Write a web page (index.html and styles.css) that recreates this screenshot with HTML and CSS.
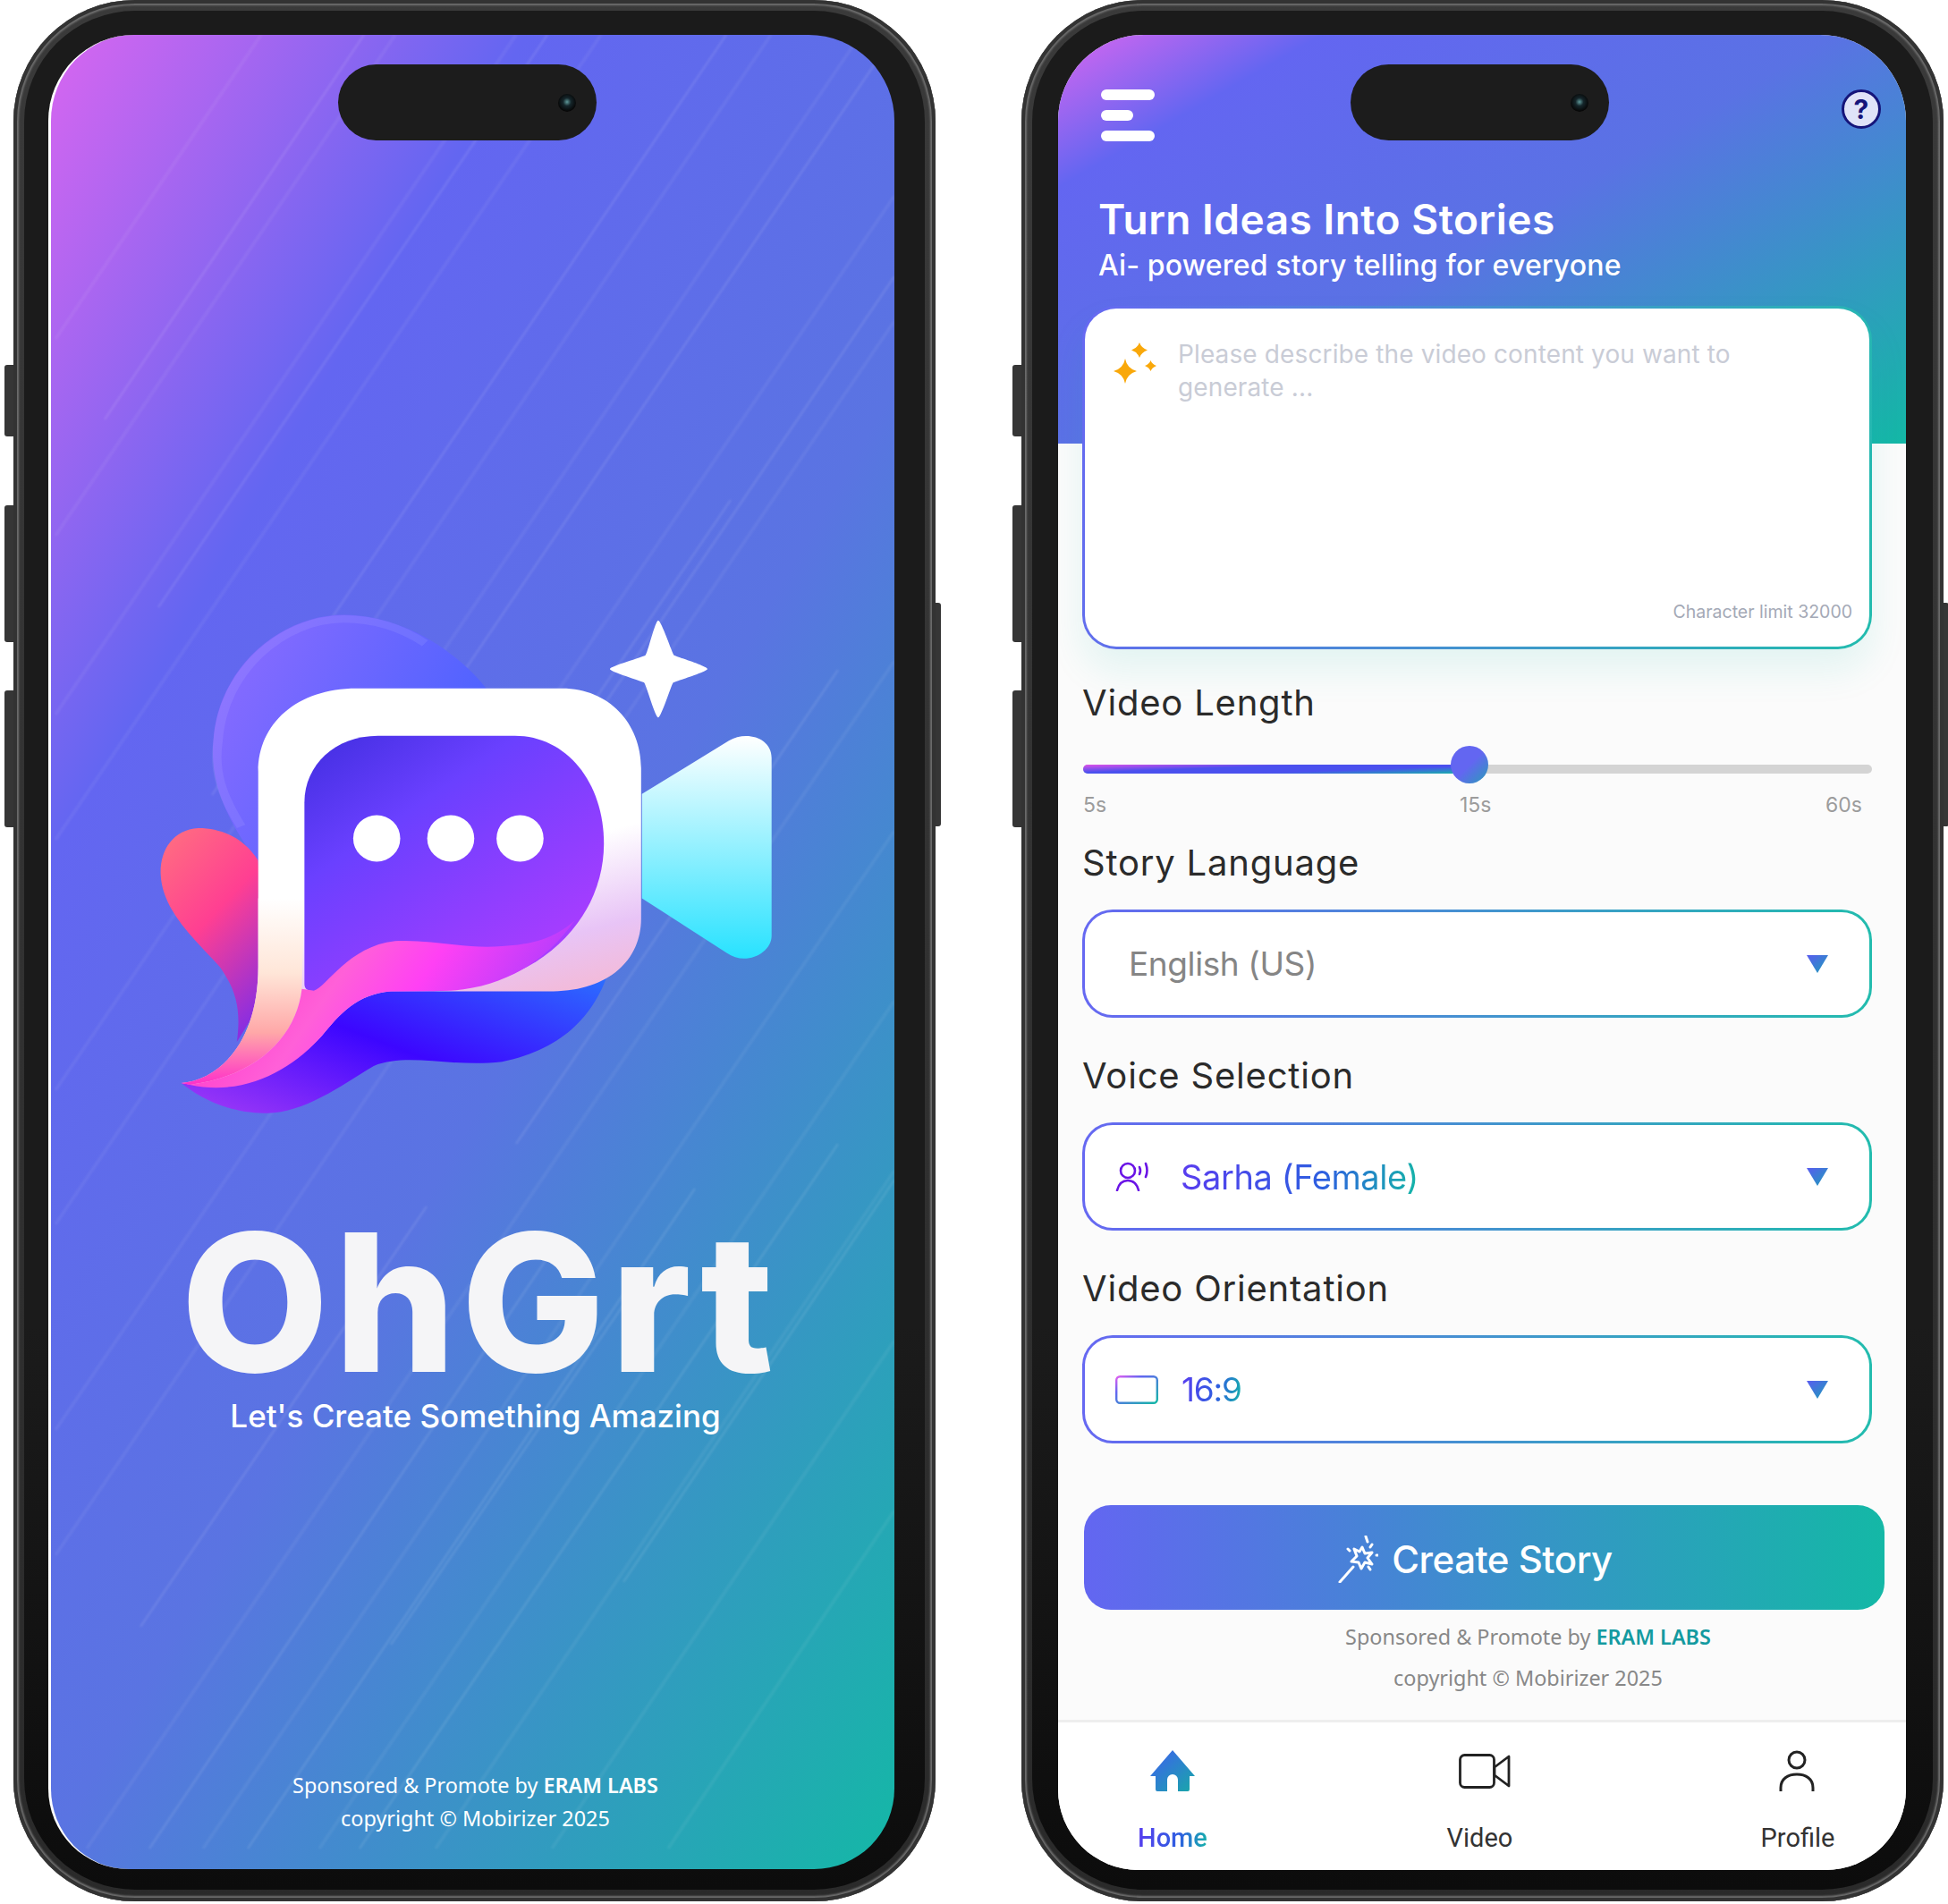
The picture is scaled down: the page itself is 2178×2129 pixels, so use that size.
FILE: index.html
```html
<!DOCTYPE html>
<html lang="en">
<head>
    <meta charset="UTF-8">
    <title>OhGrt</title>
    <link rel="stylesheet" href="styles.css">
</head>
<body>
    <svg class="defs" width="0" height="0">
        <defs>
            <linearGradient id="arrowGrad" x1="0" y1="0" x2="1" y2="1">
                <stop offset="0" stop-color="#5a5cf0"/>
                <stop offset="1" stop-color="#1c9fb8"/>
            </linearGradient>
            <linearGradient id="homeGrad" x1="0" y1="0" x2="1" y2="1">
                <stop offset="0" stop-color="#3f5ff0"/>
                <stop offset="1" stop-color="#18a8a8"/>
            </linearGradient>
            <linearGradient id="rectGrad" x1="0" y1="0" x2="1" y2="1">
                <stop offset="0" stop-color="#e060f0"/>
                <stop offset="0.3" stop-color="#6366f1"/>
                <stop offset="1" stop-color="#14b8a6"/>
            </linearGradient>
            <linearGradient id="backBlob" x1="0" y1="0" x2="1" y2="0.5">
                <stop offset="0" stop-color="#8f6cff"/>
                <stop offset="1" stop-color="#4a62ff"/>
            </linearGradient>
            <linearGradient id="lowBlob" x1="0" y1="1" x2="1" y2="0.1">
                <stop offset="0" stop-color="#a43cf6"/>
                <stop offset="0.5" stop-color="#3c06ff"/>
                <stop offset="1" stop-color="#2c6cff"/>
            </linearGradient>
            <linearGradient id="pinkBlob" x1="0.2" y1="0" x2="0.7" y2="1">
                <stop offset="0" stop-color="#ff6a82"/>
                <stop offset="0.45" stop-color="#ff3f92"/>
                <stop offset="1" stop-color="#8a2ee0"/>
            </linearGradient>
            <linearGradient id="bodyGrad" x1="0.3" y1="0" x2="0.6" y2="1">
                <stop offset="0" stop-color="#ffffff"/>
                <stop offset="0.5" stop-color="#ffffff"/>
                <stop offset="0.72" stop-color="#e8c4f6"/>
                <stop offset="1" stop-color="#ffb0b8"/>
            </linearGradient>
            <linearGradient id="tailGrad" x1="0" y1="0" x2="0" y2="1">
                <stop offset="0" stop-color="#ffffff"/>
                <stop offset="0.4" stop-color="#ffe6d8"/>
                <stop offset="0.72" stop-color="#ffa8a8"/>
                <stop offset="1" stop-color="#ff30c8"/>
            </linearGradient>
            <linearGradient id="bubbleGrad" x1="0.1" y1="0" x2="0.9" y2="1">
                <stop offset="0" stop-color="#4630e4"/>
                <stop offset="0.3" stop-color="#6a40ff"/>
                <stop offset="1" stop-color="#b63cff"/>
            </linearGradient>
            <linearGradient id="waveGrad" x1="0" y1="0" x2="1" y2="0.3">
                <stop offset="0" stop-color="#ff20c0"/>
                <stop offset="0.45" stop-color="#ff60d8"/>
                <stop offset="0.65" stop-color="#ff40f4"/>
                <stop offset="1" stop-color="#a83cff"/>
            </linearGradient>
            <linearGradient id="camGrad" x1="0" y1="0" x2="0" y2="1">
                <stop offset="0" stop-color="#ffffff"/>
                <stop offset="1" stop-color="#28e2ff"/>
            </linearGradient>
        </defs>
    </svg>

    <!-- splash phone -->
    <div class="phone phone-splash">
        <span class="side-btn btn-a"></span>
        <span class="side-btn btn-b"></span>
        <span class="side-btn btn-c"></span>
        <span class="side-btn btn-r"></span>
        <div class="bezel">
            <div class="island"><span class="camera"></span></div>
            <div class="screen splash">
                <svg class="streaks" viewBox="0 0 943 2051" preserveAspectRatio="none">
                    <g stroke="#fff" stroke-width="4" stroke-opacity="0.06">
                        <path d="M5 340L235 0M5 560L385 0M5 760L520 0M5 900L615 0M5 1180L805 0M5 1330L905 0"/>
                        <path d="M5 1560L943 180M5 1700L943 320M40 2028L943 700M170 2028L943 890M300 2028L943 1080"/>
                        <path d="M430 2028L943 1270M560 2028L943 1460M690 2028L943 1650"/>
                    </g>
                    <g stroke="#fff" stroke-width="3" stroke-opacity="0.09">
                        <path d="M60 430L350 0M120 640L555 0M180 850L755 0M260 1010L943 0M340 1160L943 270"/>
                        <path d="M420 1020L760 520M520 1240L880 710M110 2028L560 1360M220 2028L720 1290"/>
                        <path d="M345 2028L880 1240M380 1800L640 1420M640 1730L943 1280M100 1780L420 1310"/>
                    </g>
                </svg>
                <svg class="logo" viewBox="0 0 1568 1568" preserveAspectRatio="none">
                    <path fill="url(#backBlob)" d="M290 800C230 690 175 580 185 440C195 230 340 72 490 72C620 72 750 170 825 290L700 600Z"/>
                    <path fill="none" stroke="#fff" stroke-opacity="0.08" stroke-width="22" d="M250 690C205 600 185 530 196 440C207 240 345 84 490 84C560 84 625 110 680 155"/>
                    <path fill="url(#lowBlob)" d="M1110 1110C1080 1230 1010 1340 860 1378C740 1395 640 1350 560 1390C480 1450 400 1525 310 1528C220 1530 150 1480 110 1440C220 1430 320 1330 400 1100Z"/>
                    <path fill="url(#pinkBlob)" d="M290 790C260 730 210 695 150 695C90 700 60 760 62 830C65 940 150 1030 200 1100C240 1170 250 1230 240 1320L300 1200Z"/>
                    <path fill="url(#camGrad)" d="M1187 595L1390 440C1430 410 1490 430 1490 490L1490 1010C1490 1060 1430 1100 1385 1060L1187 900Z"/>
                    <path fill="url(#bodyGrad)" d="M520 287L1000 287C1110 287 1185 390 1185 520L1185 960C1185 1080 1110 1170 980 1172L600 1172C520 1180 480 1240 440 1300C370 1400 240 1470 110 1440C200 1430 290 1320 290 1100L290 530C290 390 380 287 520 287Z"/>
                    <path fill="url(#tailGrad)" d="M290 900L398 900L392 1165C380 1300 290 1420 130 1445L110 1440C200 1430 290 1320 290 1100Z"/>
                    <path fill="url(#bubbleGrad)" d="M398 620C398 510 470 425 570 425L890 425C1010 425 1098 560 1098 740C1098 960 950 1160 700 1172L600 1172L420 1172C405 1172 398 1165 398 1150Z"/>
                    <path fill="url(#waveGrad)" d="M420 1170C450 1160 500 1040 610 1025C700 1020 780 1050 860 1040C930 1035 980 1020 1030 965C960 1090 860 1160 740 1170L600 1172C520 1180 480 1240 440 1300C370 1400 260 1480 130 1445C290 1420 380 1300 392 1165Z"/>
                    <ellipse fill="#fff" cx="567" cy="725" rx="55" ry="68"/>
                    <ellipse fill="#fff" cx="740" cy="725" rx="55" ry="68"/>
                    <ellipse fill="#fff" cx="902" cy="725" rx="55" ry="68"/>
                    <path fill="#fff" d="M1225 88C1232 88 1258 185 1262 190C1270 195 1340 222 1340 230C1340 238 1268 265 1260 270C1255 278 1232 372 1225 372C1218 372 1198 280 1192 270C1185 265 1112 238 1112 230C1112 222 1190 195 1195 190C1200 185 1218 88 1225 88Z"/>
                </svg>
                <div class="brand">OhGrt</div>
                <div class="tagline">Let's Create Something Amazing</div>
                <div class="splash-foot">
                    <p>Sponsored &amp; Promote by <b>ERAM LABS</b></p>
                    <p>copyright © Mobirizer 2025</p>
                </div>
            </div>
        </div>
    </div>

    <!-- form phone -->
    <div class="phone phone-form">
        <span class="side-btn btn-a"></span>
        <span class="side-btn btn-b"></span>
        <span class="side-btn btn-c"></span>
        <span class="side-btn btn-r"></span>
        <div class="bezel">
            <div class="island"><span class="camera"></span></div>
            <div class="screen form-screen">
                <div class="hero">
                    <div class="topbar">
                        <div class="menu-icon"><span></span><span class="short"></span><span></span></div>
                        <div class="help-icon">?</div>
                    </div>
                    <h1>Turn Ideas Into Stories</h1>
                    <p class="hero-sub">Ai- powered story telling for everyone</p>
                </div>
                <div class="content">
                    <div class="prompt-card">
                        <div class="prompt-row">
                            <svg class="sparkle" viewBox="0 0 48 46" width="48" height="46">
                                <path fill="#f9a80a" d="M13 18Q15 29 26 32Q15 35 13 46Q11 35 0 32Q11 29 13 18Z"/>
                                <path fill="#f9a80a" d="M29 0Q31 6 38 8.500Q31 11 29 17Q27 11 20 8.500Q27 6 29 0Z"/>
                                <path fill="#f9a80a" d="M41.500 20Q43 24 48 26Q43 28 41.500 32Q40 28 35 26Q40 24 41.500 20Z"/>
                            </svg>
                            <p class="placeholder">Please describe the video content you want to generate ...</p>
                        </div>
                        <div class="char-limit">Character limit 32000</div>
                    </div>

                    <div class="label label-first">Video Length</div>
                    <div class="slider">
                        <div class="slider-fill"></div>
                        <div class="slider-thumb"></div>
                    </div>
                    <div class="ticks"><span>5s</span><span class="tick-mid">15s</span><span>60s</span></div>

                    <div class="label label-lang">Story Language</div>
                    <div class="select">
                        <span class="select-plain">English (US)</span>
                        <svg class="arrow" viewBox="0 0 26 22" width="26" height="22"><path fill="url(#arrowGrad)" d="M1 1H25L13 21Z"/></svg>
                    </div>

                    <div class="label">Voice Selection</div>
                    <div class="select">
                        <svg class="select-icon" viewBox="0 0 37 33" width="37" height="33" fill="none" stroke="#6a14e6" stroke-width="2.6" stroke-linecap="round">
                            <circle cx="14" cy="10" r="8"/>
                            <path d="M2 32C4 24 9 21 14 21C20 21 24 24 26 32"/>
                            <path d="M27 6Q29 10 27 14"/>
                            <path d="M34 2Q37 10 34 17"/>
                        </svg>
                        <span class="select-value grad-text">Sarha (Female)</span>
                        <svg class="arrow" viewBox="0 0 26 22" width="26" height="22"><path fill="url(#arrowGrad)" d="M1 1H25L13 21Z"/></svg>
                    </div>

                    <div class="label">Video Orientation</div>
                    <div class="select">
                        <svg class="select-icon" viewBox="0 0 48 32" width="48" height="32"><rect x="1.2" y="1.2" width="45.6" height="29.6" rx="4" fill="none" stroke="url(#rectGrad)" stroke-width="2.4"/></svg>
                        <span class="select-ratio grad-text">16:9</span>
                        <svg class="arrow" viewBox="0 0 26 22" width="26" height="22"><path fill="url(#arrowGrad)" d="M1 1H25L13 21Z"/></svg>
                    </div>

                    <button class="create-btn">
                        <svg viewBox="0 0 45 53" width="45" height="53" fill="none" stroke="#fff" stroke-width="3" stroke-linecap="round" stroke-linejoin="round">
                            <path d="M2 52L17 35"/>
                            <path d="M27 13L30 20L38 19L33 25L38 32L30 30L26 37L23 30L15 29L21 23L18 15L24 18Z"/>
                            <path d="M31 1L33 7M11 15L13 17M43 22L44 22M38 10L36 13M36 38L34 35"/>
                        </svg>
                        <span>Create Story</span>
                    </button>

                    <div class="form-foot">
                        <p>Sponsored &amp; Promote by <b>ERAM LABS</b></p>
                        <p>copyright © Mobirizer 2025</p>
                    </div>
                </div>
                <nav class="tabbar">
                    <div class="tab">
                        <svg viewBox="0 0 50 46" width="50" height="46"><path fill="url(#homeGrad)" d="M25 0L50 29H44V44Q44 46 42 46H31V33A6 6 0 0 0 19 33V46H8Q6 46 6 44V29H0Z"/></svg>
                        <span class="grad-text tab-active">Home</span>
                    </div>
                    <div class="tab">
                        <svg viewBox="0 0 58 46" width="58" height="46" fill="none" stroke="#222" stroke-width="2.8" stroke-linejoin="round">
                            <rect x="1.5" y="5.5" width="38" height="36" rx="5"/>
                            <path d="M40 19L56 7V40L40 28Z"/>
                        </svg>
                        <span class="tab-video">Video</span>
                    </div>
                    <div class="tab">
                        <svg viewBox="0 0 40 46" width="40" height="46" fill="none" stroke="#222" stroke-width="3" stroke-linecap="round">
                            <circle cx="20" cy="11" r="9"/>
                            <path d="M2 46V42C2 32 10 27 20 27C30 27 38 32 38 42V46"/>
                        </svg>
                        <span class="tab-profile">Profile</span>
                    </div>
                </nav>
            </div>
        </div>
    </div>
</body>
</html>
```

FILE: styles.css
```css
* {
    box-sizing: border-box;
}

body {
    margin: 0;
    width: 2178px;
    height: 2129px;
    overflow: hidden;
    background: #fff;
    display: flex;
    align-items: flex-start;
    padding-left: 15px;
    gap: 96px;
    font-family: 'Inter', sans-serif;
}

p {
    margin: 0;
}

.defs {
    position: absolute;
}

/* phone shell */
.phone {
    position: relative;
    flex: none;
    width: 1031px;
    height: 2126px;
    padding: 12px 12px 13px;
    border-radius: 136px;
    background: linear-gradient(#3a3a3a, #303030 60%, #2a2a2a);
    box-shadow: inset 0 0 0 4px #333, inset 0 0 2px 6px #6e6e6e;
}

.bezel {
    position: relative;
    height: 100%;
    padding: 27px 34px 23px 27px;
    border-radius: 124px;
    background: linear-gradient(#1b1b1b 70%, #0c0c0c);
}

.phone-form .bezel {
    padding: 27px 30px 22px 29px;
}

.side-btn {
    position: absolute;
    left: -10px;
    width: 10px;
    background: #363636;
    border-radius: 3px 0 0 3px;
}

.btn-a {
    top: 408px;
    height: 80px;
}

.btn-b {
    top: 565px;
    height: 153px;
}

.btn-c {
    top: 772px;
    height: 153px;
}

.btn-r {
    left: auto;
    right: -6px;
    width: 6px;
    top: 674px;
    height: 250px;
    border-radius: 0 3px 3px 0;
}

.island {
    position: absolute;
    z-index: 3;
    top: 60px;
    left: 351px;
    width: 289px;
    height: 85px;
    border-radius: 43px;
    background: #1c1c1c;
}

.phone-form .island {
    left: 356px;
}

.camera {
    position: absolute;
    top: 33px;
    right: 23px;
    width: 20px;
    height: 20px;
    border-radius: 50%;
    background: radial-gradient(circle at 50% 45%, #5f9a9a 0, #15262b 30%, #060606 70%);
}

.screen {
    position: relative;
    height: 100%;
    border-radius: 96px 96px 90px 90px;
    overflow: hidden;
}

/* splash */
.splash {
    border-left: 3px solid #fff;
    display: flex;
    flex-direction: column;
    align-items: center;
    padding-left: 6px;
    background: linear-gradient(120deg, #d866f0 0, #6366f1 25%, #5a74e2 55%, #14b8a6 100%);
    color: #fff;
}

.streaks {
    position: absolute;
    top: 0;
    left: 0;
    width: 100%;
    height: 100%;
    filter: blur(1px);
}

.logo {
    position: relative;
    flex: none;
    width: 750px;
    height: 600px;
    margin: 621px 0 0 87px;
    align-self: flex-start;
}

.brand {
    position: relative;
    margin-top: 97px;
    padding-left: 10px;
    font-size: 214px;
    line-height: 200px;
    font-weight: 800;
    letter-spacing: 6px;
    color: #f5f5f7;
}

.tagline {
    position: relative;
    font-size: 35px;
    line-height: 44px;
    font-weight: 500;
    margin-top: 4px;
}

.splash-foot {
    position: relative;
    margin-top: auto;
    padding-bottom: 38px;
    font-family: 'Noto Sans', sans-serif;
    font-size: 23.4px;
    line-height: 37px;
    text-align: center;
}

.splash-foot b {
    font-weight: 600;
}

/* form screen */
.form-screen {
    display: flex;
    flex-direction: column;
    background: #fbfbfb;
}

.hero {
    flex: none;
    height: 457px;
    padding: 61px 28px 0 45px;
    background: linear-gradient(150deg, #d866f0 0, #6366f1 17%, #5a72e4 50%, #14b8a6 100%);
    color: #fff;
}

.topbar {
    display: flex;
    justify-content: space-between;
    align-items: flex-start;
    height: 57px;
}

.menu-icon {
    display: flex;
    flex-direction: column;
    gap: 11px;
    width: 60px;
    margin-left: 3px;
}

.menu-icon span {
    display: block;
    height: 12px;
    border-radius: 6px;
    background: #fff;
}

.menu-icon .short {
    width: 36px;
}

.help-icon {
    width: 44px;
    height: 44px;
    border: 3px solid #15157a;
    border-radius: 50%;
    background: #dfe3f8;
    color: #15157a;
    font-size: 30px;
    font-weight: 700;
    line-height: 38px;
    text-align: center;
}

h1 {
    margin: 60px 0 0;
    font-size: 46px;
    line-height: 56px;
    font-weight: 600;
    letter-spacing: 0.5px;
}

.hero-sub {
    margin-top: 4px;
    font-size: 32px;
    line-height: 40px;
    font-weight: 500;
    letter-spacing: 0.15px;
}

.content {
    position: relative;
    flex: 1;
    margin-top: -154px;
    padding: 0 38px 0 27px;
    display: flex;
    flex-direction: column;
}

.prompt-card {
    height: 384px;
    padding: 33px 33px 0 32px;
    display: flex;
    flex-direction: column;
    border: 3px solid transparent;
    border-radius: 38px;
    background: linear-gradient(#fff, #fff) padding-box, linear-gradient(100deg, #6668f2, #22bcae) border-box;
    box-shadow: 0 24px 40px rgba(20, 184, 166, 0.1);
}

.prompt-row {
    display: flex;
    gap: 24px;
    flex: 1;
}

.sparkle {
    flex: none;
    margin-top: 5px;
}

.placeholder {
    width: 650px;
    font-size: 28px;
    line-height: 37px;
    color: #c9ccd6;
    letter-spacing: 0.12px;
}

.char-limit {
    align-self: flex-end;
    margin: 0 -14px 26px 0;
    font-size: 19.5px;
    line-height: 26px;
    color: #a4a9b6;
}

.label {
    margin-top: 42px;
    font-size: 40px;
    line-height: 46px;
    color: #2b2b2b;
    letter-spacing: 0.8px;
}

.label-first {
    margin-top: 37px;
}

.label-lang {
    margin-top: 27px;
}

.slider {
    position: relative;
    margin-top: 46px;
    height: 10px;
    margin-left: 1px;
    border-radius: 5px;
    background: #d4d4d4;
}

.slider-fill {
    width: 440px;
    height: 100%;
    border-radius: 5px;
    background: linear-gradient(178deg, #e050e8 0, #4a50ee 35%, #4a50ee 65%, #14b8a6 100%);
}

.slider-thumb {
    position: absolute;
    top: -21px;
    left: 411px;
    width: 42px;
    height: 42px;
    border-radius: 50%;
    background: linear-gradient(135deg, #6366f1 50%, #2a9cb8);
}

.ticks {
    position: relative;
    display: flex;
    justify-content: space-between;
    margin-top: 20px;
    padding: 0 11px 0 1px;
    font-size: 23px;
    line-height: 30px;
    color: #9c9c9c;
}

.tick-mid {
    position: absolute;
    left: 422px;
}

.select {
    height: 121px;
    margin-top: 29px;
    padding: 0 45px 0 34px;
    display: flex;
    align-items: center;
    border: 3px solid transparent;
    border-radius: 34px;
    background: linear-gradient(#fff, #fff) padding-box, linear-gradient(90deg, #6668f2, #22bcae) border-box;
    font-size: 37px;
    letter-spacing: -0.4px;
}

.select-plain {
    margin-left: 15px;
    color: #858585;
}

.select-icon {
    flex: none;
}

.select-value {
    margin-left: 36px;
    font-size: 38px;
}

.select-ratio {
    margin-left: 26px;
    letter-spacing: -1.2px;
}

.grad-text {
    background: linear-gradient(100deg, #5a3cf0, #2d5fe0 60%, #14b8a6);
    -webkit-background-clip: text;
    background-clip: text;
    color: transparent;
}

.arrow {
    margin-left: auto;
}

.create-btn {
    flex: none;
    width: 895px;
    height: 117px;
    margin: 69px 0 0 2px;
    padding: 4px 20px 0 0;
    display: flex;
    align-items: center;
    justify-content: center;
    gap: 15px;
    border: none;
    border-radius: 30px;
    background: linear-gradient(90deg, #6366f1, #14b8a6);
    color: #fff;
    font-family: inherit;
    font-size: 42px;
    font-weight: 500;
    letter-spacing: -0.5px;
}

.form-foot {
    margin-top: 7px;
    padding-left: 114px;
    font-family: 'Noto Sans', sans-serif;
    font-size: 23.4px;
    line-height: 46px;
    color: #888;
    text-align: center;
}

.form-foot b {
    font-weight: 600;
    color: #149aa0;
}

.tabbar {
    flex: none;
    height: 168px;
    padding: 31px 62px 0 68px;
    display: flex;
    justify-content: space-between;
    border-top: 3px solid #eee;
    background: #fff;
}

.tab {
    width: 120px;
    display: flex;
    flex-direction: column;
    align-items: center;
    gap: 34px;
    font-family: 'Roboto', sans-serif;
    font-size: 29px;
    line-height: 36px;
    color: #333;
}

.tab-active {
    font-weight: 500;
}

.tab-video {
    margin-right: 11px;
}

.tab-profile {
    margin-left: 2px;
}
```
